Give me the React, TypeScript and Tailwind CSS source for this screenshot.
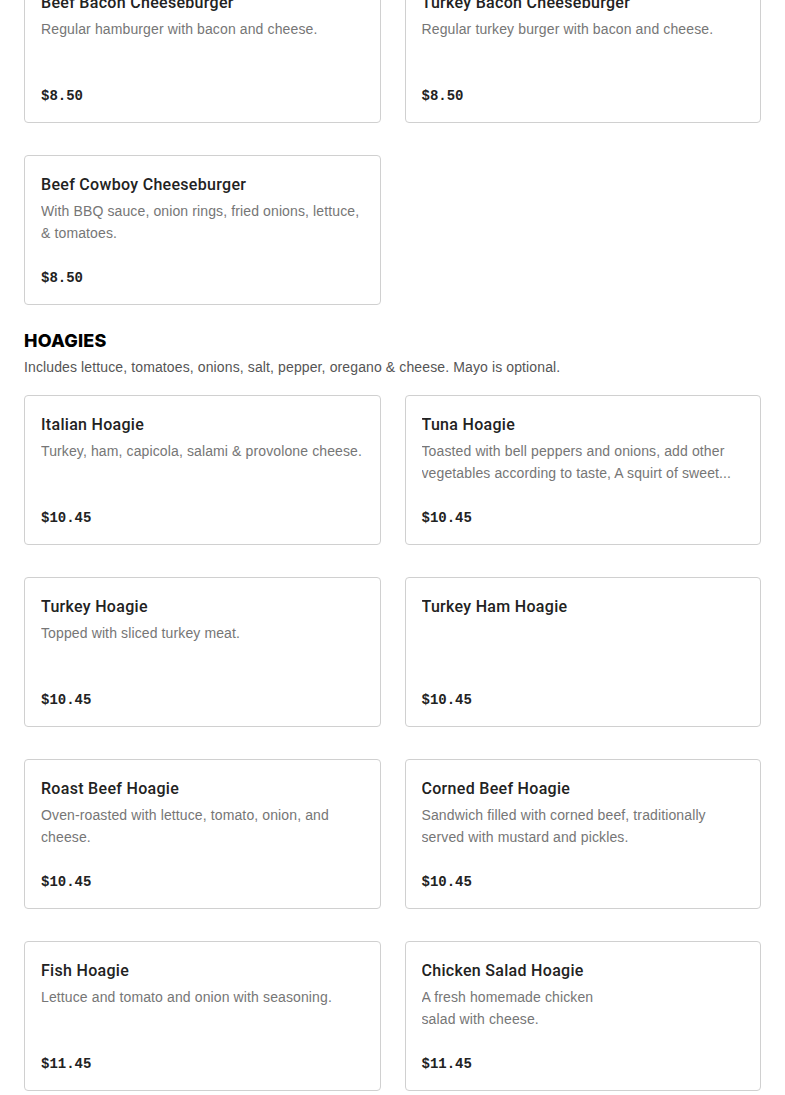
import React from "react";

type Item = { name: string; desc?: React.ReactNode; price: string };

const burgers: Item[] = [
  { name: "Beef Bacon Cheeseburger", desc: "Regular hamburger with bacon and cheese.", price: "$8.50" },
  { name: "Turkey Bacon Cheeseburger", desc: "Regular turkey burger with bacon and cheese.", price: "$8.50" },
  { name: "Beef Cowboy Cheeseburger", desc: "With BBQ sauce, onion rings, fried onions, lettuce, & tomatoes.", price: "$8.50" },
];

const hoagies: Item[] = [
  { name: "Italian Hoagie", desc: "Turkey, ham, capicola, salami & provolone cheese.", price: "$10.45" },
  {
    name: "Tuna Hoagie",
    desc: "Toasted with bell peppers and onions, add other vegetables according to taste, A squirt of sweet...",
    price: "$10.45",
  },
  { name: "Turkey Hoagie", desc: "Topped with sliced turkey meat.", price: "$10.45" },
  { name: "Turkey Ham Hoagie", price: "$10.45" },
  { name: "Roast Beef Hoagie", desc: "Oven-roasted with lettuce, tomato, onion, and cheese.", price: "$10.45" },
  {
    name: "Corned Beef Hoagie",
    desc: "Sandwich filled with corned beef, traditionally served with mustard and pickles.",
    price: "$10.45",
  },
  { name: "Fish Hoagie", desc: "Lettuce and tomato and onion with seasoning.", price: "$11.45" },
  {
    name: "Chicken Salad Hoagie",
    desc: (
      <>
        A fresh homemade chicken
        <br />
        salad with cheese.
      </>
    ),
    price: "$11.45",
  },
];

const sans = '"Liberation Sans", Arial, sans-serif';

function Card({ item }: { item: Item }) {
  return (
    <div className="flex h-[150px] flex-col rounded-[4px] border border-[#d0d0d0] bg-white px-4 pt-[17px] pb-[15px]">
      <div
        className="truncate text-[16px] leading-6 font-medium tracking-[0.3px] text-[#222]"
        style={{ fontFamily: 'Roboto, "Liberation Sans", Arial, sans-serif' }}
      >
        {item.name}
      </div>
      {item.desc ? (
        <div className="mt-[3px] line-clamp-2 text-[14px] leading-[22px] tracking-[0.12px] text-[#767676]">
          {item.desc}
        </div>
      ) : null}
      <div
        className="mt-auto text-[14px] leading-[22px] font-bold text-[#222]"
        style={{ fontFamily: '"Liberation Mono", "DejaVu Sans Mono", monospace' }}
      >
        {item.price}
      </div>
    </div>
  );
}

export default function App() {
  return (
    <div className="min-h-screen overflow-hidden bg-white px-6" style={{ fontFamily: sans }}>
      <div className="-mt-[27px] grid grid-cols-2 gap-x-6 gap-y-8">
        {burgers.map((b) => (
          <Card key={b.name} item={b} />
        ))}
      </div>
      <div className="mt-[23px]">
        <h2
          className="text-[18px] leading-[26px] font-extrabold tracking-[0.2px] text-black"
          style={{ fontFamily: 'Inter, "Liberation Sans", Arial, sans-serif' }}
        >
          HOAGIES
        </h2>
        <p className="mt-[2px] text-[14px] leading-[22px] tracking-[0.12px] text-[#555]">
          Includes lettuce, tomatoes, onions, salt, pepper, oregano &amp; cheese. Mayo is optional.
        </p>
      </div>
      <div className="mt-[17px] grid grid-cols-2 gap-x-6 gap-y-8 pb-8">
        {hoagies.map((h) => (
          <Card key={h.name} item={h} />
        ))}
      </div>
    </div>
  );
}
